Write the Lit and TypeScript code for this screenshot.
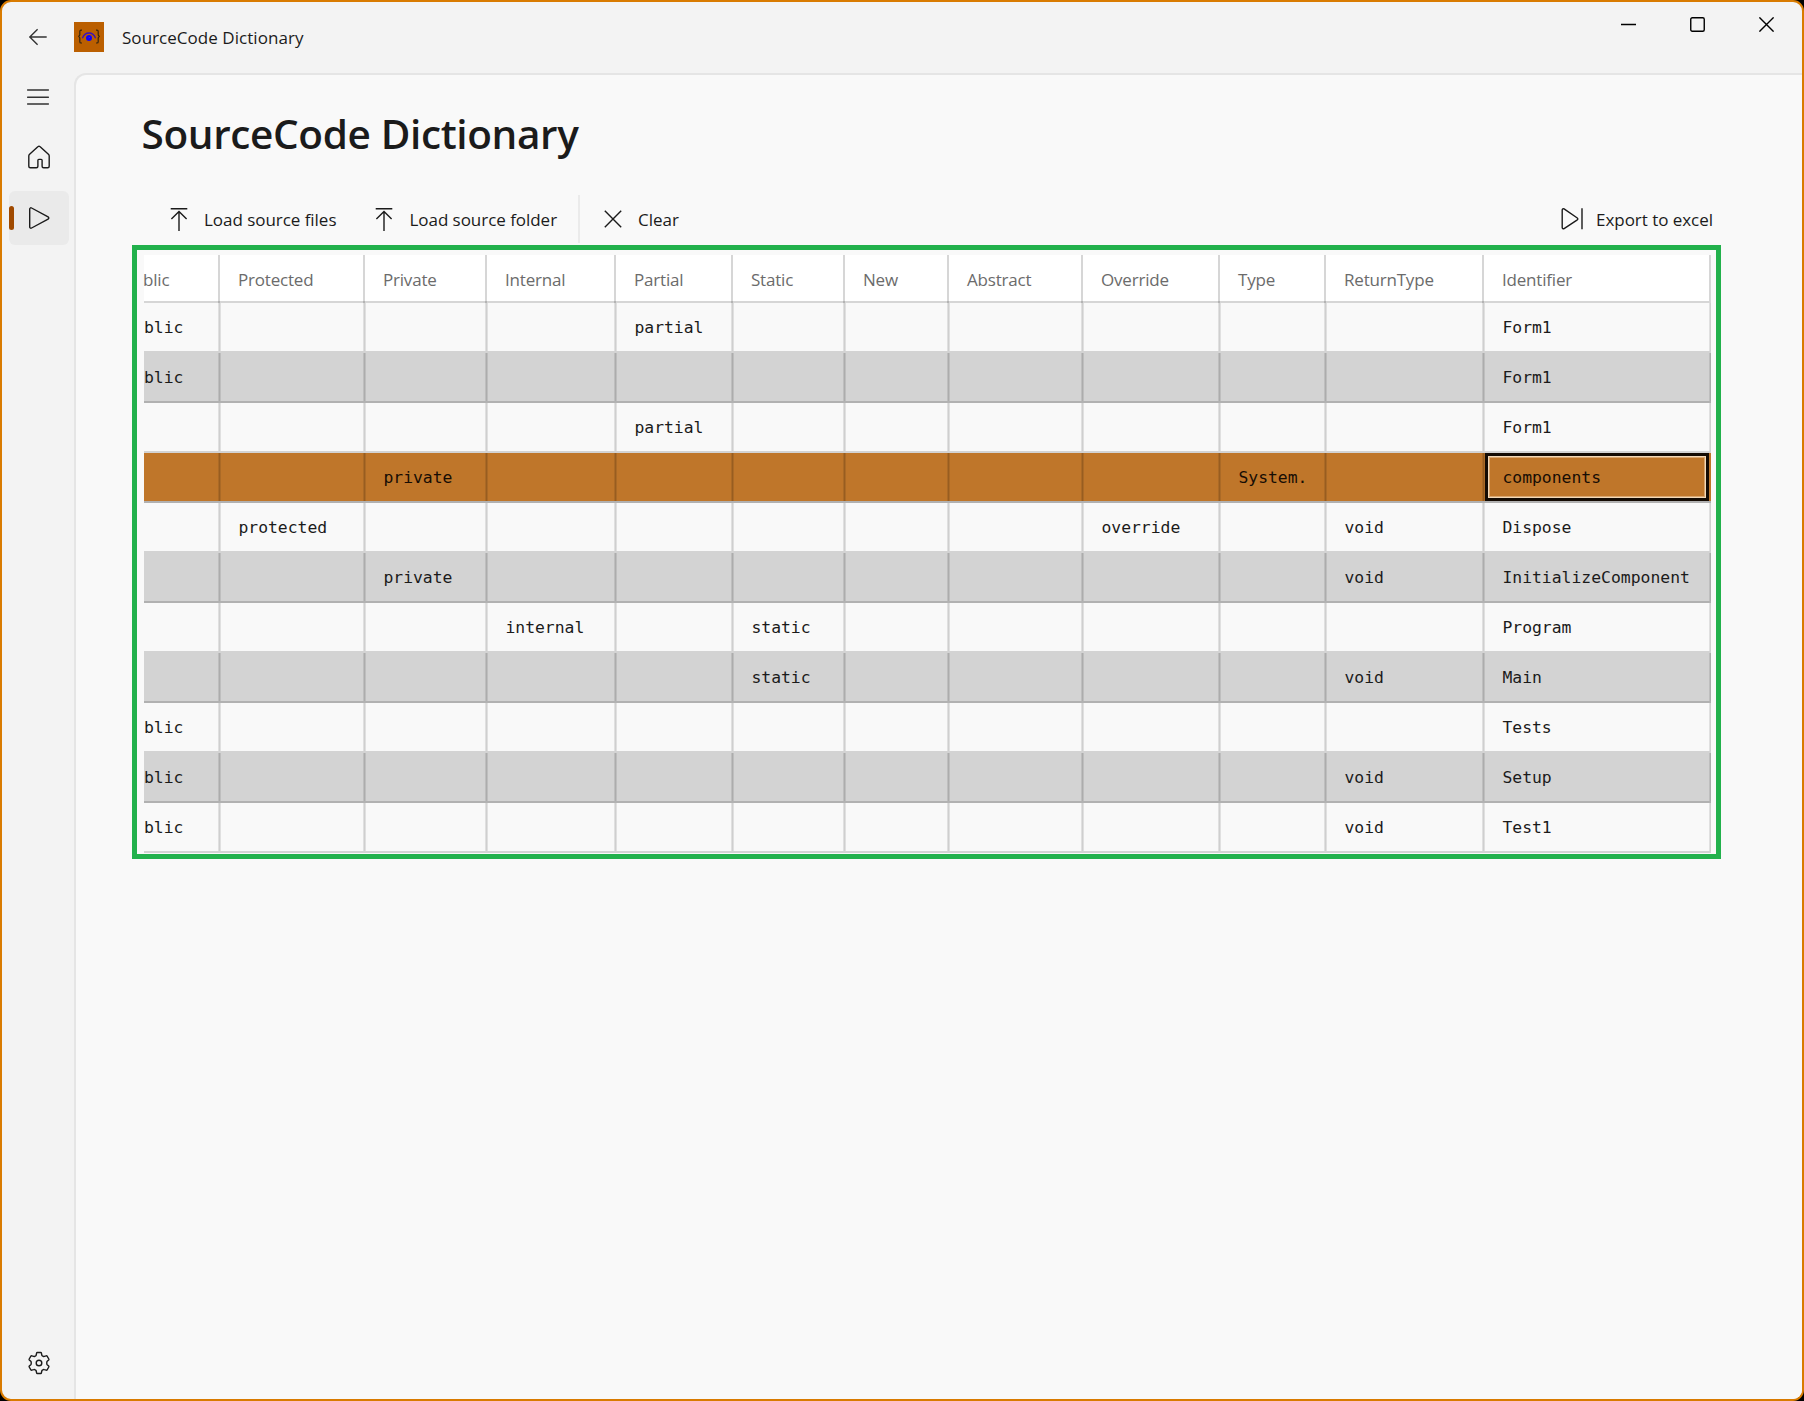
import { LitElement, html, svg, css, nothing } from "lit";
import { customElement, property, state } from "lit/decorators.js";
import { classMap } from "lit/directives/class-map.js";

const glyphs = {
  back: { w: 20, h: 18, body: svg`<path d="M1.6 9H18.7M9.6 1.2 1.8 9l7.8 7.8" stroke="#333" />` },
  menu: { w: 24, h: 18, body: svg`<path d="M1.6 2H22.4M1.6 9.2H22.4M1.6 16H22.4" stroke="#333" stroke-linecap="round" />` },
  home: {
    w: 24, h: 26,
    body: svg`<path d="M11.1 2.6a1.3 1.3 0 0 1 1.8 0l8.5 7.7c.5.5.8 1 .8 1.7v10.2c0 .9-.6 1.5-1.5 1.5h-4.100c-.9 0-1.500-.6-1.500-1.500v-5.900c0-.6-.3-.9-.9-.9h-2.400c-.6 0-.9.3-.9.9v5.900c0 .9-.6 1.500-1.500 1.500H3.300c-.9 0-1.500-.6-1.500-1.500V12c0-.7.3-1.200.8-1.700z" />`,
  },
  play: { w: 24, h: 24, body: svg`<path d="M2.7 3.1v17.8c0 1 1 1.600 1.900 1.100l16.500-8.900c.9-.5.9-1.700 0-2.200L4.600 2C3.700 1.500 2.700 2.100 2.700 3.100z" />` },
  gear: {
    w: 24, h: 24,
    body: svg`<path d="M10.300 1.500h3.400q.6 0 .7.600l.4 1.900q.1.500.6.800l.9.500q.5.300 1 .1l1.900-.6q.6-.2.9.3l1.700 2.900q.3.500-.1.900l-1.500 1.400q-.4.400-.4.900v1.600q0 .5.400.900l1.500 1.400q.4.400.1.900l-1.700 2.900q-.3.500-.9.300l-1.900-.6q-.5-.2-1 .1l-.9.500q-.5.300-.6.800l-.4 1.900q-.1.600-.7.600h-3.400q-.6 0-.7-.6l-.4-1.900q-.1-.5-.6-.8l-.9-.5q-.5-.3-1-.1l-1.900.6q-.6.200-.9-.3l-1.700-2.900q-.3-.5.1-.9l1.500-1.400q.4-.4.400-.9v-1.600q0-.5-.4-.9L2.300 8.900q-.4-.4-.1-.9l1.700-2.900q.3-.5.900-.3l1.900.6q.5.200 1-.1l.9-.5q.5-.3.600-.8l.4-1.900q.1-.6.700-.6z" /><circle cx="12" cy="12" r="2.800" />`,
  },
  upload: { w: 18, h: 25, body: svg`<path d="M.7 1.700H17.300M9 24V4.500M1.400 12 9 4.400l7.600 7.600" />` },
  clear: { w: 18, h: 18, body: svg`<path d="M.8.8 17.200 17.200M17.200.8.8 17.200" />` },
  export: { w: 24, h: 24, body: svg`<path d="M2.200 3v17.500c0 1 1 1.600 1.900 1.100l13.200-8.800c.7-.5.7-1.300 0-1.800L4.100 1.900C3.200 1.400 2.200 2 2.200 3zM22 1.200v21" />` },
  minimize: { w: 15, h: 15, body: svg`<path d="M0 7.500H15" stroke="#000" />` },
  maximize: { w: 15, h: 15, body: svg`<rect x=".75" y=".75" width="13.500" height="13.500" rx="1.500" stroke="#000" />` },
  close: { w: 15, h: 15, body: svg`<path d="M.4.4 14.600 14.600M14.600.4.4 14.600" stroke="#000" />` },
};
type Glyph = keyof typeof glyphs;

@customElement("app-icon")
class AppIcon extends LitElement {
  @property() name: Glyph = "home";
  static styles = css`
    :host { display: block; flex: none; line-height: 0; }
    svg { display: block; fill: none; stroke: #1b1b1b; stroke-width: 1.4; }
  `;
  render() {
    const g = glyphs[this.name];
    return html`<svg width=${g.w} height=${g.h} viewBox="0 0 ${g.w} ${g.h}">${g.body}</svg>`;
  }
}

@customElement("app-logo")
class AppLogo extends LitElement {
  static styles = css`:host { display: block; flex: none; } svg { display: block; }`;
  render() {
    return html`<svg width="30" height="30" viewBox="0 0 30 30" fill="none">
      <rect width="30" height="30" fill="#bb5f00" />
      <path d="M8 8.200H7C6.200 8.200 5.800 8.700 5.800 9.500v3.200c0 1-.5 1.600-1.600 1.700 1.100.1 1.600.7 1.600 1.700v3.600c0 .8.400 1.300 1.200 1.300h1M22 8.200h1c.8 0 1.200.5 1.200 1.300v3.200c0 1 .5 1.600 1.600 1.700-1.100.1-1.600.7-1.600 1.700v3.600c0 .8-.4 1.300-1.200 1.300h-1" stroke="#33240f" stroke-width="1.200" />
      <path d="M8.400 16.200C9.600 12.800 12 11 15 11s5.400 1.800 6.600 5.200" stroke="#3a12b8" stroke-width="1.300" />
      <circle cx="15" cy="15.900" r="3" fill="#0d00ff" />
      <path d="M14.600 16.200l1-1" stroke="#7a4a80" stroke-width="1" />
    </svg>`;
  }
}

const columns: [string, number][] = [
  ["blic", 76], ["Protected", 145], ["Private", 122], ["Internal", 129],
  ["Partial", 117], ["Static", 112], ["New", 104], ["Abstract", 134],
  ["Override", 137], ["Type", 106], ["ReturnType", 158], ["Identifier", 227],
];

const rows: Record<string, string>[] = [
  { blic: "blic", Partial: "partial", Identifier: "Form1" },
  { blic: "blic", Identifier: "Form1" },
  { Partial: "partial", Identifier: "Form1" },
  { Private: "private", Type: "System.", Identifier: "components" },
  { Protected: "protected", Override: "override", ReturnType: "void", Identifier: "Dispose" },
  { Private: "private", ReturnType: "void", Identifier: "InitializeComponent" },
  { Internal: "internal", Static: "static", Identifier: "Program" },
  { Static: "static", ReturnType: "void", Identifier: "Main" },
  { blic: "blic", Identifier: "Tests" },
  { blic: "blic", ReturnType: "void", Identifier: "Setup" },
  { blic: "blic", ReturnType: "void", Identifier: "Test1" },
];

@customElement("member-grid")
class MemberGrid extends LitElement {
  @state() private selected = 3;
  static styles = css`
    :host { display: block; border: 5px solid #22b14c; padding: 5px 5px 1px 7px; box-sizing: border-box; width: 1589px; height: 614px; }
    .row { --line: #cfcfcf; --soft: #e0e0e0; display: grid; width: 1567px; height: 50px; box-sizing: border-box; border-bottom: 2px solid #d3d3d3; color: #1b1b1b; }
    .cell { display: flex; align-items: center; min-width: 0; box-sizing: border-box; padding: 2px 0 0 18.4px; border-right: 1px solid var(--line); box-shadow: inset -1px 0 var(--soft), 1px 0 var(--soft); white-space: nowrap; font: 16.400px/24px "DejaVu Sans Mono", monospace; }
    .cell.first { justify-content: flex-start; padding-left: 0; }
    .cell:last-child { box-shadow: inset -1px 0 var(--soft); }
    .head { height: 48px; background: #fff; color: #6b6b6b; border-color: #d6d6d6; }
    .head .cell { font: 17px/24px "Open Sans", sans-serif; letter-spacing: -0.2px; padding: 2px 0 0 18px; margin-bottom: -2px; box-shadow: none; border-right: 2px solid rgba(0, 0, 0, 0.16); }
    .head .cell.first { padding-left: 0; text-indent: -1px; }
    .head .cell:last-child { margin-bottom: 0; padding-top: 4px; }
    .alt { --line: #acacac; --soft: #bebebe; background: #d3d3d3; border-color: #b1b1b1; }
    .selected { --line: #985d20; --soft: #ab6a26; background: #bf762a; border-color: #b1b1b1; color: #170d04; }
    .selected .cell.focus { outline: 3px solid #140b03; outline-offset: -3px; box-shadow: inset 0 0 0 4px #f3d9b8, inset 0 0 0 5px #dba66d; margin: 0 2px 0 1px; padding-left: 17.400px; border: 0; }
  `;
  render() {
    const template = `grid-template-columns:${columns.map((c) => c[1] + "px").join(" ")}`;
    return html`
      <div class="row head" style=${template}>
        ${columns.map(([name], i) => html`<div class=${classMap({ cell: true, first: i === 0 })}>${name}</div>`)}
      </div>
      ${rows.map((row, r) => html`
        <div class=${classMap({ row: true, alt: r % 2 === 1, selected: r === this.selected })} style=${template}
          @click=${() => (this.selected = r)}>
          ${columns.map(([name], i) => html`<div class=${classMap({
            cell: true, first: i === 0, focus: r === this.selected && i === columns.length - 1,
          })}>${row[name] ?? nothing}</div>`)}
        </div>`)}
    `;
  }
}

@customElement("app-root")
class AppRoot extends LitElement {
  static styles = css`
    :host { display: block; width: 1804px; height: 1401px; background: #000; font-family: "Open Sans", sans-serif; color: #1b1b1b; }
    .window { display: flex; flex-direction: column; box-sizing: border-box; width: 100%; height: 100%; border: 2px solid #d97b00; border-radius: 11px; background: #f3f3f3; overflow: hidden; }
    .titlebar { display: flex; height: 71px; flex: none; align-items: flex-start; }
    .back { margin: 26px 0 0 26px; }
    .logo { margin: 20px 0 0 26px; }
    .caption { margin: 24px 0 0 18px; font-size: 17px; line-height: 24px; letter-spacing: 0.04px; }
    .controls { display: flex; gap: 54px; margin: 15px 28px 0 auto; }
    .main { display: flex; flex: 1; min-height: 0; }
    .rail { display: flex; flex-direction: column; width: 72px; flex: none; }
    .item { display: flex; align-items: center; justify-content: center; box-sizing: border-box; width: 60px; height: 54px; margin: 0 0 6px 7px; border-radius: 6px; }
    .item.menu { height: 48px; margin-bottom: 10px; padding: 0 2px 0 0; }
    .item.home { padding-bottom: 2px; }
    .item.active { background: #eaeaea; justify-content: flex-start; gap: 13px; }
    .item.bottom { margin-top: auto; margin-bottom: 9px; }
    .pill { width: 5px; height: 24px; border-radius: 2.5px; background: #a04a00; }
    .content { flex: 1; min-width: 0; box-sizing: border-box; border: solid #e5e5e5; border-width: 2px 0 0 2px; border-top-left-radius: 12px; background: #f9f9f9; padding: 31px 0 0 56px; }
    h1 { margin: 0 0 0 9.500px; font-weight: 600; font-size: 40.500px; line-height: 56px; letter-spacing: -0.360px; }
    .toolbar { display: flex; align-items: center; height: 48px; margin: 33px 0 2px 38px; width: 1543px; font-size: 17px; line-height: 24px; letter-spacing: -0.040px; }
    .command { display: flex; align-items: center; gap: 16px; }
    .command span { padding-top: 2px; }
    .command + .command { margin-left: 39px; }
    .separator { width: 2px; height: 48px; background: #ebebeb; margin: 0 24px 0 21px; }
    .command.end { margin-left: auto; gap: 12px; }
  `;
  private command(icon: Glyph, label: string, end = false) {
    return html`<div class=${classMap({ command: true, end })}><app-icon name=${icon}></app-icon><span>${label}</span></div>`;
  }
  render() {
    return html`
      <div class="window">
        <header class="titlebar">
          <app-icon class="back" name="back"></app-icon>
          <app-logo class="logo"></app-logo>
          <div class="caption">SourceCode Dictionary</div>
          <div class="controls">
            <app-icon name="minimize"></app-icon>
            <app-icon name="maximize"></app-icon>
            <app-icon name="close"></app-icon>
          </div>
        </header>
        <div class="main">
          <nav class="rail">
            <div class="item menu"><app-icon name="menu"></app-icon></div>
            <div class="item home"><app-icon name="home"></app-icon></div>
            <div class="item active"><i class="pill"></i><app-icon name="play"></app-icon></div>
            <div class="item bottom"><app-icon name="gear"></app-icon></div>
          </nav>
          <section class="content">
            <h1>SourceCode Dictionary</h1>
            <div class="toolbar">
              ${this.command("upload", "Load source files")}
              ${this.command("upload", "Load source folder")}
              <div class="separator"></div>
              ${this.command("clear", "Clear")}
              ${this.command("export", "Export to excel", true)}
            </div>
            <member-grid></member-grid>
          </section>
        </div>
      </div>
    `;
  }
}
